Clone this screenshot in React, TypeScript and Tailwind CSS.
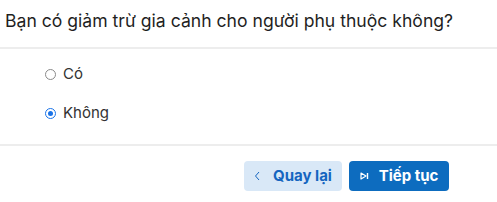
import React, { useState } from 'react';

const App: React.FC = () => {
  const [answer, setAnswer] = useState('khong');

  const options = [
    { value: 'co', label: 'Có' },
    { value: 'khong', label: 'Không' },
  ];

  return (
    <div className="w-[497px] h-[202px] bg-white text-[#222] font-['Inter',sans-serif]">
      <div className="h-[49px] border-b-2 border-[#ededed] pl-[5px] pt-[9px]">
        <h1 className="text-[17.6px] leading-[24px] text-[#1f1f1f]">Bạn có giảm trừ gia cảnh cho người phụ thuộc không?</h1>
      </div>

      <div className="h-[97px] border-b-2 border-[#ededed] pl-[45px] pt-[15px] flex flex-col gap-[19px]">
        {options.map((opt) => (
          <label key={opt.value} className="flex items-center gap-[7px] h-[20px] cursor-pointer">
            {answer === opt.value ? (
              <span className="w-[11px] h-[11px] rounded-full border-[1.5px] border-[#1a73e8] bg-white flex items-center justify-center">
                <span className="w-[5px] h-[5px] rounded-full bg-[#1a73e8]" />
              </span>
            ) : (
              <span className="w-[11px] h-[11px] rounded-full border border-[#8a8a8a] bg-white" />
            )}
            <input
              type="radio"
              className="hidden"
              checked={answer === opt.value}
              onChange={() => setAnswer(opt.value)}
            />
            <span className="text-[15px] text-[#333]">{opt.label}</span>
          </label>
        ))}
      </div>

      <div className="flex justify-end gap-[7px] pr-[48px] pt-[15px]">
        <button className="w-[98px] h-[30px] rounded-[4px] bg-[#d9e8f7] text-[#1565c0] font-bold text-[15px] flex items-center justify-center gap-[13px]">
          <svg width="6" height="10" viewBox="0 0 6 10" fill="none">
            <path d="M5 1 L1.5 5 L5 9" stroke="#1565c0" strokeWidth="1" />
          </svg>
          Quay lại
        </button>
        <button className="w-[100px] h-[30px] rounded-[4px] bg-[#0d6cbf] text-white font-bold text-[15px] flex items-center justify-center gap-[10px]">
          <svg width="9" height="8" viewBox="0 0 9 8" fill="none">
            <path d="M1 1 L6 4 L1 7 Z" stroke="white" strokeWidth="1.2" strokeLinejoin="round" />
            <path d="M7.5 1 V7" stroke="white" strokeWidth="1.4" />
          </svg>
          Tiếp tục
        </button>
      </div>
    </div>
  );
};

export default App;
